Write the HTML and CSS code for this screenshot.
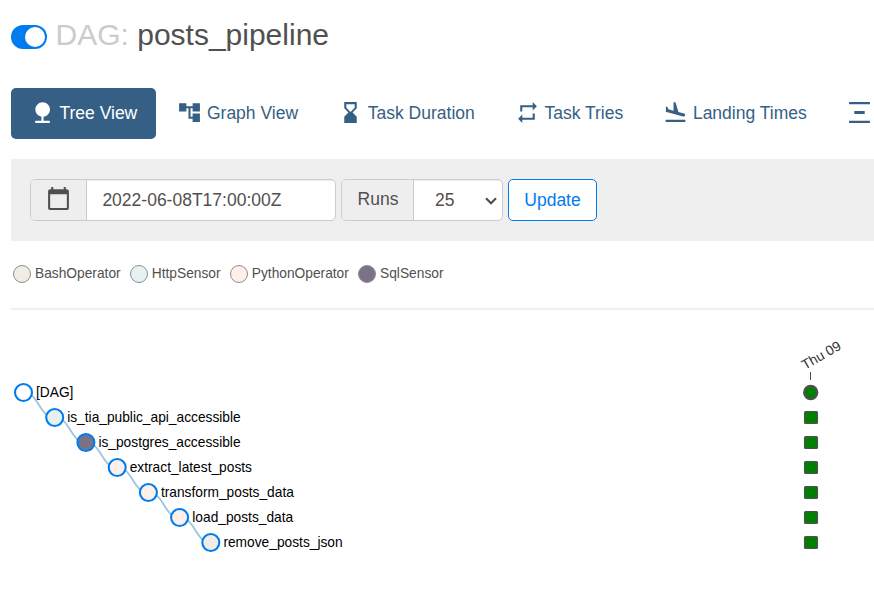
FILE: index.html
```
<!DOCTYPE html>
<html lang="en">
<head>
<meta charset="utf-8">
<title>posts_pipeline - Tree View</title>
<link rel="stylesheet" href="styles.css">
</head>
<body>
<main>
  <header class="title">
    <span class="switch" role="switch" aria-checked="true"></span>
    <h1><span class="muted">DAG:</span> posts_pipeline</h1>
  </header>
  <nav class="tabs">
    <a class="tab active"><svg class="icon" viewBox="0 0 24 24"><path d="M13 16.12c3.47-.41 6.17-3.36 6.17-6.95 0-3.87-3.13-7-7-7s-7 3.13-7 7c0 3.47 2.52 6.34 5.83 6.89V20H5v2h14v-2h-6v-3.88z"/></svg>Tree View</a>
    <a class="tab"><svg class="icon" viewBox="0 0 24 24"><path d="M22 11V3h-7v3H9V3H2v8h7V8h2v10h4v3h7v-8h-7v3h-2V8h2v3z"/></svg>Graph View</a>
    <a class="tab"><svg class="icon" viewBox="0 0 24 24"><path d="M18 22l-.01-6L14 12l3.99-4.01L18 2H6v6l4 4-4 3.99V22h12zM8 7.5V4h8v3.5l-4 4-4-4z"/></svg>Task Duration</a>
    <a class="tab"><svg class="icon" viewBox="0 0 24 24"><path d="M7 7h10v3l4-4-4-4v3H5v6h2V7zm10 10H7v-3l-4 4 4 4v-3h12v-6h-2v4z"/></svg>Task Tries</a>
    <a class="tab"><svg class="icon" viewBox="0 0 24 24"><path d="M2.5 19h19v2h-19v-2zm7.18-5.73l4.35 1.16 5.31 1.42c.8.21 1.62-.26 1.84-1.06.21-.8-.26-1.62-1.06-1.84l-5.31-1.42-2.76-9.02L10.12 2v8.28L5.15 8.95l-.93-2.32-1.45-.39v5.17l1.6.43 5.31 1.43z"/></svg>Landing Times</a>
    <a class="tab"><svg class="icon" viewBox="0 0 24 24"><path d="M22 2v2H2V2h20zM7 10.5v3h10v-3H7zM2 20v2h20v-2H2z"/></svg></a>
  </nav>
  <section class="filters">
    <div class="group date">
      <span class="addon"><svg class="icon" viewBox="0 0 24 24"><path d="M20 3h-1V1h-2v2H7V1H5v2H4c-1.1 0-2 .9-2 2v16c0 1.1.9 2 2 2h16c1.1 0 2-.9 2-2V5c0-1.1-.9-2-2-2zm0 18H4V8h16v13z"/></svg></span>
      <span class="field">2022-06-08T17:00:00Z</span>
    </div>
    <div class="group runs">
      <span class="addon">Runs</span>
      <span class="field select">25<svg class="chevron" viewBox="0 0 12 8"><path d="M1 1.2l5 5 5-5"/></svg></span>
    </div>
    <button class="update">Update</button>
  </section>
  <section class="legend">
    <span class="op"><i class="dot bash"></i>BashOperator</span>
    <span class="op"><i class="dot http"></i>HttpSensor</span>
    <span class="op"><i class="dot python"></i>PythonOperator</span>
    <span class="op"><i class="dot sql"></i>SqlSensor</span>
  </section>
  <svg class="tree" width="863" height="288" viewBox="11 310 863 288">
    <g class="links">
      <path d="M23.5 392.5C39 392.5 39 417.5 54.7 417.5"/>
      <path d="M54.7 417.5C70.3 417.5 70.3 442.5 85.9 442.5"/>
      <path d="M85.9 442.5C101.5 442.5 101.5 467.5 117.2 467.5"/>
      <path d="M117.2 467.5C132.8 467.5 132.8 492.5 148.4 492.5"/>
      <path d="M148.4 492.5C164 492.5 164 517.5 179.6 517.5"/>
      <path d="M179.6 517.5C195.2 517.5 195.2 542.5 210.8 542.5"/>
    </g>
    <g class="nodes">
      <circle class="root" cx="23.5" cy="392.5" r="8.5"/>
      <circle class="http" cx="54.7" cy="417.5" r="8.5"/>
      <circle class="sql" cx="85.9" cy="442.5" r="8.5"/>
      <circle class="python" cx="117.2" cy="467.5" r="8.5"/>
      <circle class="python" cx="148.4" cy="492.5" r="8.5"/>
      <circle class="python" cx="179.6" cy="517.5" r="8.5"/>
      <circle class="bash" cx="210.8" cy="542.5" r="8.5"/>
    </g>
    <g class="names">
      <text x="36" y="397">[DAG]</text>
      <text x="67.2" y="422">is_tia_public_api_accessible</text>
      <text x="98.4" y="447">is_postgres_accessible</text>
      <text x="129.7" y="472">extract_latest_posts</text>
      <text x="160.9" y="497">transform_posts_data</text>
      <text x="192.3" y="522">load_posts_data</text>
      <text x="223.4" y="547">remove_posts_json</text>
    </g>
    <text class="day" transform="translate(805 370) rotate(-30)">Thu 09</text>
    <path class="tick" d="M810.5 372v8"/>
    <g class="states">
      <circle cx="810.7" cy="392.5" r="6.6"/>
      <rect x="804.6" y="411.6" width="12.8" height="11.8" rx="1"/>
      <rect x="804.6" y="436.6" width="12.8" height="11.8" rx="1"/>
      <rect x="804.6" y="461.6" width="12.8" height="11.8" rx="1"/>
      <rect x="804.6" y="486.6" width="12.8" height="11.8" rx="1"/>
      <rect x="804.6" y="511.6" width="12.8" height="11.8" rx="1"/>
      <rect x="804.6" y="536.6" width="12.8" height="11.8" rx="1"/>
    </g>
  </svg>
</main>
</body>
</html>
```
FILE: styles.css
```
* { box-sizing: border-box; }
body {
  margin: 0;
  height: 598px;
  overflow: hidden;
  background: #fff;
  color: #51504f;
  font: 17.5px/25px "Liberation Sans", Arial, sans-serif;
}
main { padding-left: 11px; }
.title { display: flex; align-items: center; height: 88px; padding-bottom: 14px; }
.switch { width: 36px; height: 24px; margin-right: 8.5px; padding: 2px; border-radius: 12px; background: #017cee; }
.switch::after { content: ""; display: block; width: 20px; height: 20px; margin-left: 12px; border-radius: 50%; background: #fff; }
h1 { margin: -4px 0 0; font-size: 30px; font-weight: 400; line-height: 34px; }
.muted { color: #cbcbcb; }
.tabs { display: flex; gap: 2.5px; height: 71px; white-space: nowrap; }
.tab { display: flex; flex: none; align-items: center; gap: 4.7px; height: 51px; padding: 0 18.75px; border-radius: 5px; color: #355f84; }
.active { background: #355f84; color: #fff; }
.icon { width: 25px; height: 25px; flex: none; fill: currentColor; }
.tab .icon { margin-bottom: 2px; }
.filters { display: flex; align-items: center; gap: 5px; height: 82px; padding-left: 19px; background: #efefef; }
.group { display: flex; height: 42px; border: 1px solid #ccc; border-radius: 5px; overflow: hidden; background: #fff; }
.date { width: 306px; }
.runs { width: 162px; }
.addon { display: flex; align-items: center; justify-content: center; border-right: 1px solid #ccc; background: #eee; }
.date .addon { width: 56px; padding-bottom: 4px; }
.runs .addon { width: 72px; padding: 0 0 2px 1px; }
.field { display: flex; flex: 1; align-items: center; padding-left: 15.4px; box-shadow: inset 0 1px 1px rgba(0, 0, 0, .075); }
.select { justify-content: space-between; padding: 0 5px 0 21px; }
.chevron { width: 12px; height: 8px; margin-top: 1px; fill: none; stroke: #51504f; stroke-width: 2.2; }
.update { height: 42px; width: 89px; padding: 0; border: 1px solid #017cee; border-radius: 5px; background: #fff; color: #017cee; font: inherit; }
.legend { display: flex; gap: 9.2px; height: 69px; padding: 23px 0 0 2px; border-bottom: 2px solid #efefef; font-size: 13.75px; line-height: 20px; }
.op { display: flex; gap: 4px; height: 21px; }
.dot { width: 18px; height: 18px; margin-top: 1px; border: 1px solid #8f8f8f; border-radius: 50%; }
.bash { background: #f0ede4; fill: #f0ede4; }
.http { background: #e6f1f2; fill: #e6f1f2; }
.python { background: #ffefeb; fill: #ffefeb; }
.sql { background: #7c7287; fill: #7c7287; }
.root { fill: #fff; }
.tree { display: block; }
.links path { fill: none; stroke: #9ec5e1; stroke-width: 1.9; }
.nodes circle { stroke: #017cee; stroke-width: 2.1; }
.names text { fill: #000; font-size: 13.75px; }
.day { fill: #333; font-size: 13.75px; }
.tick { stroke: #51504f; }
.states { fill: #008000; stroke: #51504f; stroke-width: 1.3; }
.states circle { stroke-width: 2.2; }
```
